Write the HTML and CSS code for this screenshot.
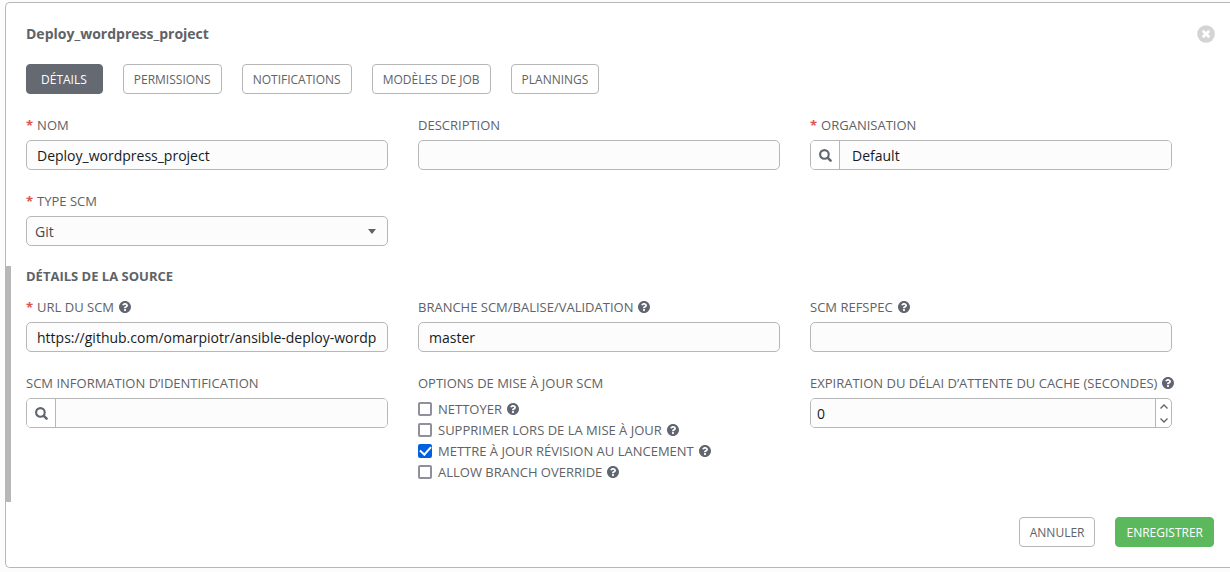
FILE: index.html
```html
<!DOCTYPE html>
<html lang="fr">
<head>
<meta charset="utf-8">
<title>Deploy_wordpress_project</title>
<link rel="stylesheet" href="styles.css">
</head>
<body>
<svg class="sprite" aria-hidden="true">
  <symbol id="help" viewBox="8 8 496 496"><path d="M504 256c0 136.997-111.043 248-248 248S8 392.997 8 256C8 119.083 119.043 8 256 8s248 111.083 248 248zM262.655 90c-54.497 0-89.255 22.957-116.549 63.758-3.536 5.286-2.353 12.415 2.715 16.258l34.699 26.31c5.205 3.947 12.621 3.008 16.665-2.122 17.864-22.658 30.113-35.797 57.303-35.797 20.429 0 45.698 13.148 45.698 32.958 0 14.976-12.363 22.667-32.534 33.976C247.128 238.528 216 254.941 216 296v4c0 6.627 5.373 12 12 12h56c6.627 0 12-5.373 12-12v-1.333c0-28.462 83.186-29.647 83.186-106.667 0-58.002-60.165-102-116.531-102zM256 338c-25.365 0-46 20.635-46 46 0 25.364 20.635 46 46 46s46-20.636 46-46c0-25.364-20.635-46-46-46z"/></symbol>
  <symbol id="search" viewBox="0 0 13 13"><circle cx="5.4" cy="5.4" r="4.3" fill="none" stroke="currentColor" stroke-width="2.1"/><path d="M8.8 8.8L11.6 11.6" fill="none" stroke="currentColor" stroke-width="2.5" stroke-linecap="round"/></symbol>
</svg>
<main class="panel">
  <header class="panel-header">
    <h1 class="title">Deploy_wordpress_project</h1>
    <button class="close" type="button" aria-label="Fermer">
      <svg viewBox="0 0 18 18" width="18" height="18"><circle cx="9" cy="9" r="8.8" fill="#d4d4d4"/><path d="M5.7 5.7l6.6 6.6M12.3 5.7l-6.6 6.6" stroke="#fff" stroke-width="2.8"/></svg>
    </button>
  </header>
  <nav class="tabs">
    <button class="btn tab-active" type="button">DÉTAILS</button>
    <button class="btn" type="button">PERMISSIONS</button>
    <button class="btn" type="button">NOTIFICATIONS</button>
    <button class="btn" type="button">MODÈLES DE JOB</button>
    <button class="btn" type="button">PLANNINGS</button>
  </nav>
  <form>
    <div class="grid">
      <div class="field">
        <label class="label" for="name"><span class="required">*</span>NOM</label>
        <input class="control" id="name" type="text" value="Deploy_wordpress_project">
      </div>
      <div class="field">
        <label class="label" for="description">DESCRIPTION</label>
        <input class="control" id="description" type="text">
      </div>
      <div class="field">
        <label class="label" for="organization"><span class="required">*</span>ORGANISATION</label>
        <div class="group">
          <button class="lookup" type="button" aria-label="Rechercher une organisation"><svg class="search-icon"><use href="#search"/></svg></button>
          <input class="group-input" id="organization" type="text" value="Default">
        </div>
      </div>
      <div class="field">
        <label class="label" for="scm-type"><span class="required">*</span>TYPE SCM</label>
        <div class="select-wrap">
          <select class="control select" id="scm-type"><option>Git</option></select>
          <svg class="caret" viewBox="0 0 8 5"><path d="M0 0h8L4 5z"/></svg>
        </div>
      </div>
    </div>
    <section class="source">
      <h2 class="subtitle">DÉTAILS DE LA SOURCE</h2>
      <div class="grid">
        <div class="field">
          <label class="label" for="url"><span class="required">*</span>URL DU SCM<svg class="help"><use href="#help"/></svg></label>
          <input class="control" id="url" type="text" value="https://github.com/omarpiotr/ansible-deploy-wordp">
        </div>
        <div class="field">
          <label class="label" for="branch">BRANCHE SCM/BALISE/VALIDATION<svg class="help"><use href="#help"/></svg></label>
          <input class="control" id="branch" type="text" value="master">
        </div>
        <div class="field">
          <label class="label" for="refspec">SCM REFSPEC<svg class="help"><use href="#help"/></svg></label>
          <input class="control" id="refspec" type="text">
        </div>
        <div class="field">
          <label class="label" for="credential">SCM INFORMATION D’IDENTIFICATION</label>
          <div class="group">
            <button class="lookup" type="button" aria-label="Rechercher une information d’identification"><svg class="search-icon"><use href="#search"/></svg></button>
            <input class="group-input" id="credential" type="text">
          </div>
        </div>
        <div class="field" role="group" aria-labelledby="options">
          <div class="label" id="options">OPTIONS DE MISE À JOUR SCM</div>
          <label class="option"><input class="check" type="checkbox">NETTOYER<svg class="help"><use href="#help"/></svg></label>
          <label class="option"><input class="check" type="checkbox">SUPPRIMER LORS DE LA MISE À JOUR<svg class="help"><use href="#help"/></svg></label>
          <label class="option"><input class="check" type="checkbox" checked>METTRE À JOUR RÉVISION AU LANCEMENT<svg class="help"><use href="#help"/></svg></label>
          <label class="option"><input class="check" type="checkbox">ALLOW BRANCH OVERRIDE<svg class="help"><use href="#help"/></svg></label>
        </div>
        <div class="field">
          <label class="label" for="timeout">EXPIRATION DU DÉLAI D’ATTENTE DU CACHE (SECONDES)<svg class="help"><use href="#help"/></svg></label>
          <div class="group">
            <input class="group-input number" id="timeout" type="number" value="0">
            <div class="stepper">
              <button class="step" type="button" aria-label="Augmenter"><svg viewBox="0 0 8 5" width="8" height="5"><path d="M0.5 4.5L4 1l3.5 3.5"/></svg></button>
              <button class="step" type="button" aria-label="Diminuer"><svg viewBox="0 0 8 5" width="8" height="5"><path d="M0.5 0.5L4 4l3.5-3.5"/></svg></button>
            </div>
          </div>
        </div>
      </div>
    </section>
    <footer class="actions">
      <button class="btn" type="button">ANNULER</button>
      <button class="btn save" type="submit">ENREGISTRER</button>
    </footer>
  </form>
</main>
</body>
</html>
```

FILE: styles.css
```css
* {
  box-sizing: border-box;
}

body {
  margin: 0;
  padding: 2px 0 4px 5px;
  background: #fcfcfc;
  color: #606266;
  font-family: "Open Sans", "Noto Sans", sans-serif;
  font-size: 13px;
  line-height: 20px;
}

button,
input,
select {
  margin: 0;
  font-family: inherit;
}

.sprite {
  display: none;
}

.panel {
  padding: 21px 15px 20px 20px;
  border: 1px solid #b7b7b7;
  border-right: 0;
  border-radius: 5px 0 0 5px;
  background: #fff;
}

.panel-header {
  display: flex;
  align-items: center;
  justify-content: space-between;
}

.title {
  margin: 0;
  font-size: 14px;
  font-weight: 700;
}

.close {
  display: flex;
  padding: 0;
  border: 0;
  background: none;
}

.tabs {
  display: flex;
  gap: 20px;
  margin: 20px 0 21px;
}

.btn {
  height: 30px;
  padding: 0 10px;
  border: 1px solid #b7b7b7;
  border-radius: 4px;
  background: #fff;
  color: #606266;
  font-size: 12px;
  white-space: nowrap;
}

.tab-active {
  padding: 0 15px 0 14px;
  border-color: #646972;
  background: #646972;
  color: #fff;
}

.grid {
  display: grid;
  grid-template-columns: repeat(3, minmax(0, 1fr));
  gap: 21px 30px;
  margin-right: 43px;
}

.label {
  display: flex;
  align-items: center;
  margin-bottom: 5px;
  white-space: nowrap;
}

.required {
  margin-right: 4px;
  color: #d9534f;
  font-size: 13px;
  font-weight: 700;
}

.help {
  flex: none;
  width: 12px;
  height: 12px;
  margin-left: 5px;
  fill: #606570;
}

.control {
  display: block;
  width: 100%;
  height: 30px;
  padding: 0 10px;
  border: 1px solid #b7b7b7;
  border-radius: 5px;
  background: #fcfcfc;
  color: #161b1f;
  font-size: 14px;
}

.select-wrap {
  position: relative;
}

.select {
  appearance: none;
  padding: 0 8px;
  color: #484a4e;
}

.caret {
  position: absolute;
  top: 13px;
  right: 12px;
  width: 8px;
  height: 5px;
  fill: #606266;
  pointer-events: none;
}

.group {
  display: flex;
  height: 30px;
  border: 1px solid #b7b7b7;
  border-radius: 5px;
  background: #fff;
  overflow: hidden;
}

.lookup {
  display: flex;
  align-items: center;
  justify-content: center;
  width: 29px;
  padding: 0;
  border: 0;
  border-right: 1px solid #b7b7b7;
  background: #fff;
  color: #606570;
}

.search-icon {
  width: 13px;
  height: 13px;
}

.group-input {
  flex: 1;
  min-width: 0;
  padding: 0 12px;
  border: 0;
  background: #fcfcfc;
  color: #161b1f;
  font-size: 14px;
}

.number {
  padding: 0 6px;
  appearance: textfield;
}

.number::-webkit-inner-spin-button {
  appearance: none;
  margin: 0;
}

.stepper {
  display: flex;
  flex-direction: column;
  width: 16px;
  border-left: 1px solid #b7b7b7;
}

.step {
  display: flex;
  flex: 1;
  align-items: center;
  justify-content: center;
  padding: 0;
  border: 0;
  background: none;
}

.step path {
  fill: none;
  stroke: #606266;
  stroke-width: 1.3;
}

.source {
  margin: 20px 0 15px -21px;
  padding: 0 0 20px 15px;
  border-left: 6px solid #b7b7b7;
}

.subtitle {
  margin: 0 0 11px;
  font-size: 13px;
  font-weight: 700;
}

.option {
  display: flex;
  align-items: center;
  height: 21px;
  white-space: nowrap;
}

.check {
  display: flex;
  align-items: center;
  justify-content: center;
  appearance: none;
  width: 14px;
  height: 14px;
  margin-right: 6px;
  border: 2px solid #8f8f9d;
  border-radius: 2px;
  background: #fff;
}

.check:checked {
  border-color: #0060df;
  background: #0060df;
}

.check:checked::after {
  content: "";
  flex: none;
  width: 5px;
  height: 9px;
  margin-bottom: 3px;
  border: solid #fff;
  border-width: 0 2px 2px 0;
  transform: rotate(42deg);
}

.actions {
  display: flex;
  justify-content: flex-end;
  gap: 20px;
  margin-right: 1px;
}

.save {
  border-color: #5cb85c;
  background: #5cb85c;
  color: #fff;
}
```
